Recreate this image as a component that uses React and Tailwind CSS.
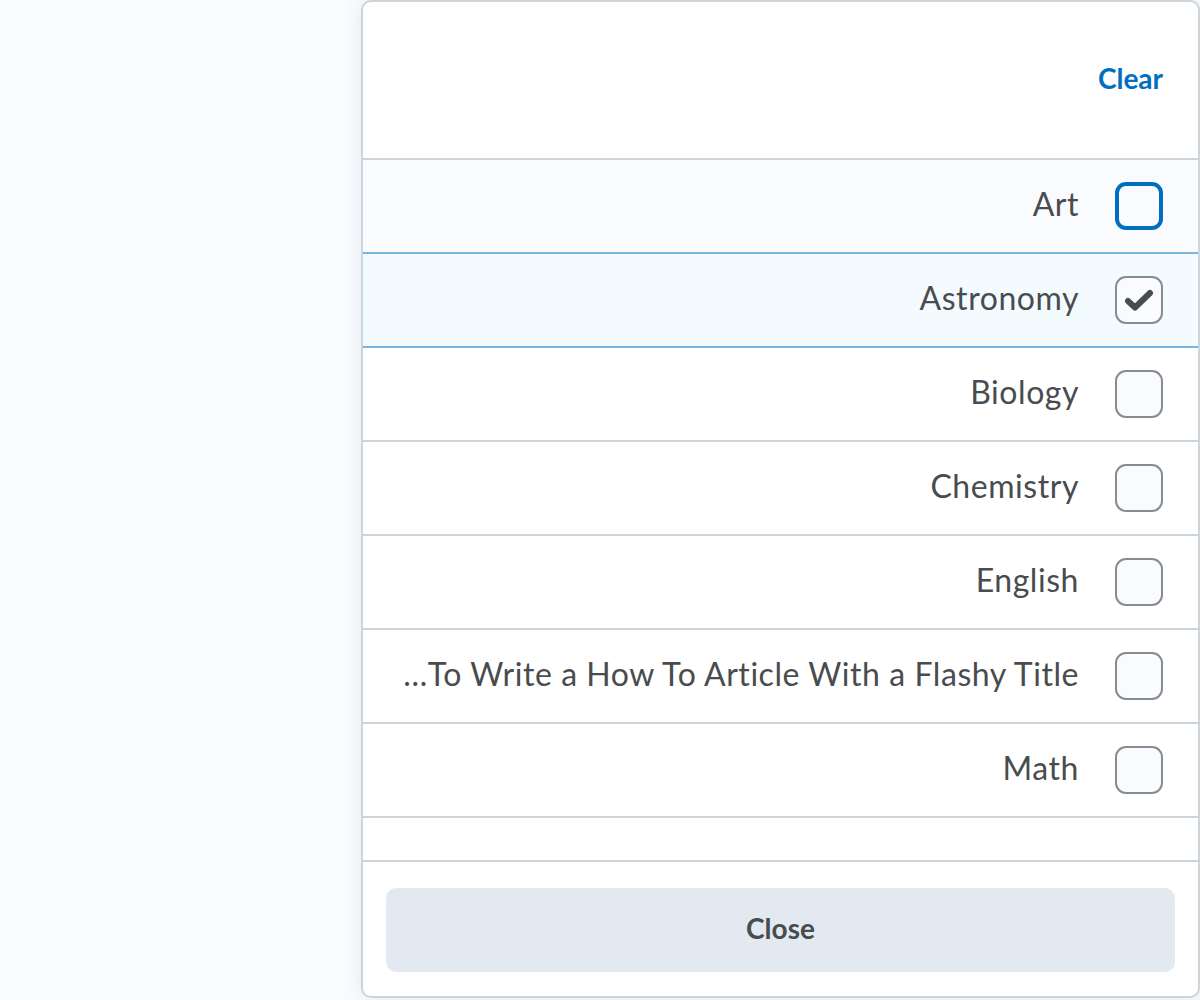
import React from 'react'

const items = [
  { label: 'Art', focused: true },
  { label: 'Astronomy', checked: true },
  { label: 'Biology' },
  { label: 'Chemistry' },
  { label: 'English' },
  { label: '…To Write a How To Article With a Flashy Title' },
  { label: 'Math' },
]

const CheckBox = ({ checked, focused }) => {
  if (focused) {
    return (
      <div className="w-[48px] h-[48px] shrink-0 rounded-[11px] border-[4px] border-[#006fbf] bg-[#f9fbff]" />
    )
  }
  return (
    <div className="w-[48px] h-[48px] shrink-0 rounded-[11px] border-2 border-[#868c8f] bg-[#f9fbff] flex items-center justify-center">
      {checked && (
        <svg width="30" height="22" viewBox="0 0 30 22">
          <path
            d="M4 12 L11 18.5 L26 4"
            fill="none"
            stroke="#494c4e"
            strokeWidth="6"
            strokeLinecap="round"
            strokeLinejoin="round"
          />
        </svg>
      )}
    </div>
  )
}

const Row = ({ item, nextSelected }) => {
  const bg = item.checked ? 'bg-[#f3fbff]' : item.focused ? 'bg-[#f9fbff]' : 'bg-white'
  const border = item.checked || nextSelected ? 'border-[#79b5e0]' : 'border-[#cdd5dc]'
  return (
    <div className={`h-[94px] shrink-0 flex items-center justify-end gap-[36px] pr-[35px] pl-[10px] border-b-2 ${border} ${bg}`}>
      <span className="text-[32px] tracking-[0.55px] text-[#494c4e] whitespace-nowrap pb-[4px]">{item.label}</span>
      <CheckBox checked={item.checked} focused={item.focused} />
    </div>
  )
}

export default function App() {
  return (
    <div
      className="w-full h-[1000px] bg-[#f9fbff] flex justify-end overflow-hidden"
      style={{ fontFamily: 'Lato, "Noto Sans", sans-serif' }}
    >
      <div className="w-[839px] h-[998px] bg-white border-2 border-[#cdd5dc] rounded-[10px] shadow-[0_0_18px_rgba(86,90,92,0.12)] flex flex-col overflow-hidden">
        <div className="h-[158px] shrink-0 flex items-center justify-end pr-[35px] pb-[4px] border-b-2 border-[#cdd5dc]">
          <button className="text-[28px] font-bold text-[#006fbf]">Clear</button>
        </div>
        <div className="h-[702px] shrink-0 flex flex-col overflow-hidden">
          {items.map((item, i) => (
            <Row key={item.label} item={item} nextSelected={items[i + 1] && items[i + 1].checked} />
          ))}
          <div className="h-[44px] shrink-0 border-b-2 border-[#cdd5dc]" />
        </div>
        <div className="flex-1 px-[23px] pt-[26px]">
          <button className="w-full h-[84px] rounded-[10px] bg-[#e3e9f1] text-[28px] font-bold text-[#494c4e] pb-[5px]">
            Close
          </button>
        </div>
      </div>
    </div>
  )
}
